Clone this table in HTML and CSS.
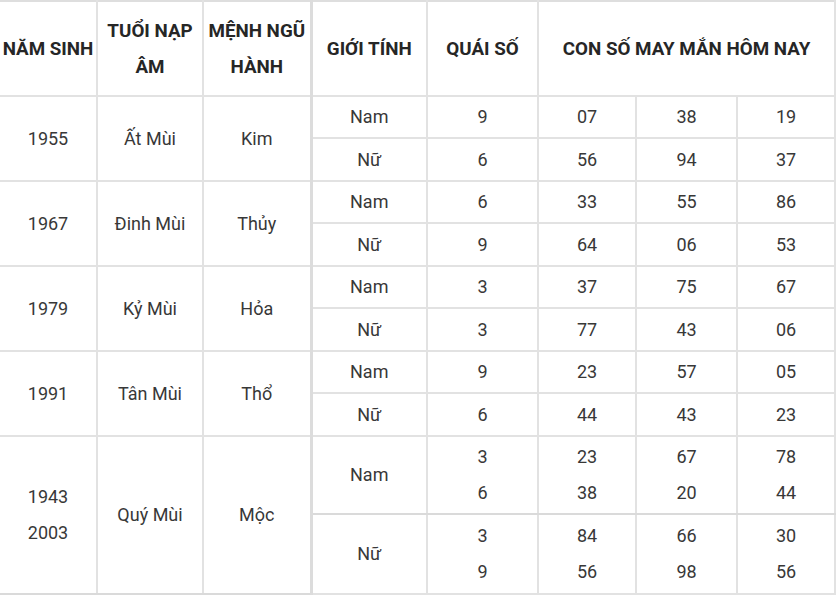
FILE: index.html
```html
<!DOCTYPE html>
<html lang="vi">
<head>
<meta charset="utf-8">
<title>Con số may mắn</title>
<link rel="stylesheet" href="styles.css">
</head>
<body>
<table class="lucky">
  <colgroup>
    <col class="c1"><col class="c2"><col class="c3"><col class="c4"><col class="c5"><col class="c6"><col class="c7"><col class="c8">
  </colgroup>
  <thead>
    <tr class="head">
      <th>NĂM SINH</th>
      <th>TUỔI NẠP ÂM</th>
      <th>MỆNH NGŨ HÀNH</th>
      <th>GIỚI TÍNH</th>
      <th>QUÁI SỐ</th>
      <th colspan="3">CON SỐ MAY MẮN HÔM NAY</th>
    </tr>
  </thead>
  <tbody>
    <tr class="r-a"><td rowspan="2">1955</td><td rowspan="2">Ất Mùi</td><td rowspan="2" class="sep">Kim</td><td>Nam</td><td>9</td><td>07</td><td>38</td><td>19</td></tr>
    <tr class="r-b"><td>Nữ</td><td>6</td><td>56</td><td>94</td><td>37</td></tr>
    <tr class="r-a"><td rowspan="2">1967</td><td rowspan="2">Đinh Mùi</td><td rowspan="2" class="sep">Thủy</td><td>Nam</td><td>6</td><td>33</td><td>55</td><td>86</td></tr>
    <tr class="r-b"><td>Nữ</td><td>9</td><td>64</td><td>06</td><td>53</td></tr>
    <tr class="r-a"><td rowspan="2">1979</td><td rowspan="2">Kỷ Mùi</td><td rowspan="2" class="sep">Hỏa</td><td>Nam</td><td>3</td><td>37</td><td>75</td><td>67</td></tr>
    <tr class="r-b"><td>Nữ</td><td>3</td><td>77</td><td>43</td><td>06</td></tr>
    <tr class="r-a"><td rowspan="2">1991</td><td rowspan="2">Tân Mùi</td><td rowspan="2" class="sep">Thổ</td><td>Nam</td><td>9</td><td>23</td><td>57</td><td>05</td></tr>
    <tr class="r-b"><td>Nữ</td><td>6</td><td>44</td><td>43</td><td>23</td></tr>
    <tr class="r-c"><td rowspan="2">1943<br>2003</td><td rowspan="2">Quý Mùi</td><td rowspan="2" class="sep">Mộc</td><td>Nam</td><td>3<br>6</td><td>23<br>38</td><td>67<br>20</td><td>78<br>44</td></tr>
    <tr class="r-d"><td>Nữ</td><td>3<br>9</td><td>84<br>56</td><td>66<br>98</td><td>30<br>56</td></tr>
  </tbody>
</table>
</body>
</html>
```

FILE: styles.css
```css
html, body {
  margin: 0;
  padding: 0;
  background: #ffffff;
}

.lucky {
  border-collapse: collapse;
  table-layout: fixed;
  width: 835px;
  font-family: Roboto, "Noto Sans", sans-serif;
  font-size: 18px;
  line-height: 36px;
  color: #383838;
  border-right: 2px solid #dedede;
}

.c1 { width: 97px; }
.c2 { width: 106px; }
.c3 { width: 108px; }
.c4 { width: 116px; }
.c5 { width: 111px; }
.c6 { width: 98px; }
.c7 { width: 101px; }
.c8 { width: 98px; }

.lucky th,
.lucky td {
  border: 2px solid #e2e2e2;
  padding: 0 2px;
  text-align: center;
  vertical-align: middle;
}

.lucky tr > :first-child {
  border-left: none;
}

.lucky th {
  font-size: 18.8px;
  font-weight: 700;
  color: #262626;
  border-top: 2px solid #dedede;
}

.head { height: 95px; }
.r-a { height: 42px; }
.r-b { height: 43px; }
.r-c { height: 78px; }
.r-d { height: 80px; }

.lucky td.sep,
.lucky .head th:nth-child(3) {
  border-right: 3px solid #dcdcdc;
}

.r-c td {
  border-bottom-color: #dadada;
}
```
